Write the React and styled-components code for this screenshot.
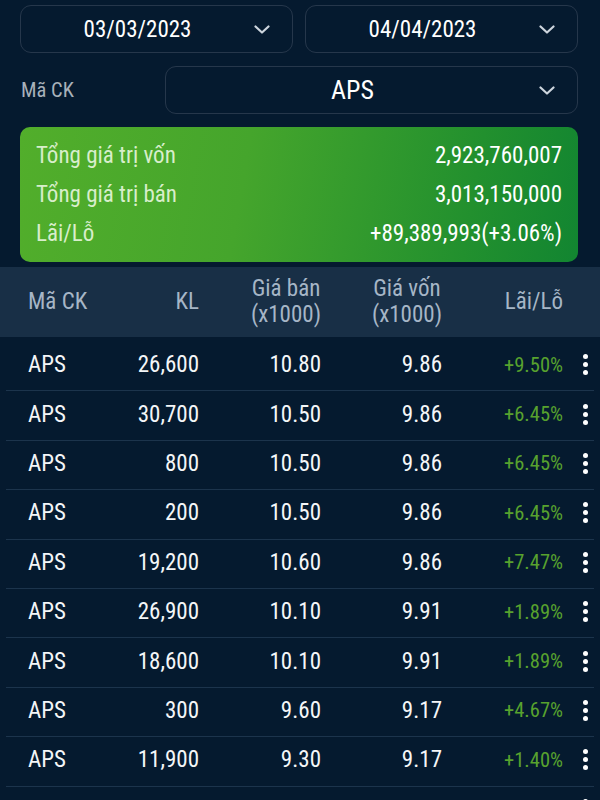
import React from "react";
import styled, { createGlobalStyle } from "styled-components";

const GlobalStyle = createGlobalStyle`
  html, body {
    margin: 0;
    padding: 0;
    background: #051a2f;
  }
  body {
    font-family: Roboto, "Noto Sans", "Liberation Sans", sans-serif;
    font-stretch: condensed;
    color: #ffffff;
    overflow: hidden;
  }
`;

const Page = styled.div`
  width: 600px;
  height: 800px;
  overflow: hidden;
  background: #051a2f;
  display: flex;
  flex-direction: column;
  & > * {
    flex-shrink: 0;
  }
`;

const Filters = styled.div`
  padding: 5px 22px 0 20px;
  display: flex;
  flex-direction: column;
  gap: 13px;
`;

const DateRow = styled.div`
  display: grid;
  grid-template-columns: 1fr 1fr;
  gap: 12px;
`;

const SelectBox = styled.div`
  height: 48px;
  box-sizing: border-box;
  border: 1.5px solid #26374b;
  border-radius: 11px;
  display: flex;
  align-items: center;
  padding-right: 22px;
`;

const SelectText = styled.span`
  flex: 1;
  text-align: center;
  font-size: ${(p) => p.$size || 23}px;
  color: #ffffff;
`;

const CodeRow = styled.div`
  display: grid;
  grid-template-columns: 145px 1fr;
  align-items: center;
`;

const Label = styled.span`
  font-size: 20.5px;
  color: #a8b1ba;
  padding-left: 1px;
`;

const Summary = styled.div`
  margin: 13px 22px 0 20px;
  border-radius: 10px;
  padding: 9px 16px 9px 16px;
  background: linear-gradient(100deg, #52ae2b 0%, #45a52c 40%, #22902e 80%, #128531 100%);
`;

const SummaryLine = styled.div`
  display: flex;
  justify-content: space-between;
  align-items: center;
  height: 39px;
  font-size: 23px;
`;

const SummaryLabel = styled.span`
  color: #d8eecb;
`;

const SummaryValue = styled.span`
  color: #ffffff;
`;

const COLS = "92px 79px 122px 121px 121px 1fr";

const HeaderRow = styled.div`
  margin-top: 5px;
  height: 70px;
  background: #182f46;
  display: grid;
  grid-template-columns: ${COLS};
  align-items: center;
  padding-left: 28px;
  font-size: 23px;
  color: #a6b6c6;
`;

const HeadCell = styled.div`
  justify-self: ${(p) => (p.$align === "left" ? "start" : "end")};
  text-align: center;
  line-height: 26px;
`;

const Body = styled.div`
  padding-top: 5px;
`;

const Row = styled.div`
  margin: 0 6px;
  height: 49.4px;
  box-sizing: border-box;
  border-bottom: 1px solid #1c344c;
  display: grid;
  grid-template-columns: ${COLS};
  align-items: center;
  padding: 0 0 3px 22px;
  font-size: 23px;
  color: #f4f6f8;
`;

const Cell = styled.div`
  justify-self: ${(p) => (p.$align === "left" ? "start" : "end")};
  color: ${(p) => (p.$profit ? "#58a22e" : "inherit")};
  font-size: ${(p) => (p.$profit ? "20.5px" : "inherit")};
`;

const MenuDots = styled.div`
  justify-self: start;
  margin-left: 20px;
  display: flex;
  flex-direction: column;
  gap: 3px;
  span {
    width: 5px;
    height: 5px;
    border-radius: 50%;
    background: #ffffff;
  }
`;

const Chevron = () => (
  <svg width="16" height="9" viewBox="0 0 16 9" fill="none">
    <path d="M1.5 1.5 L8 7.5 L14.5 1.5" stroke="#cdd5dd" strokeWidth="2.2" strokeLinecap="round" strokeLinejoin="round" />
  </svg>
);

const rows = [
  ["APS", "26,600", "10.80", "9.86", "+9.50%"],
  ["APS", "30,700", "10.50", "9.86", "+6.45%"],
  ["APS", "800", "10.50", "9.86", "+6.45%"],
  ["APS", "200", "10.50", "9.86", "+6.45%"],
  ["APS", "19,200", "10.60", "9.86", "+7.47%"],
  ["APS", "26,900", "10.10", "9.91", "+1.89%"],
  ["APS", "18,600", "10.10", "9.91", "+1.89%"],
  ["APS", "300", "9.60", "9.17", "+4.67%"],
  ["APS", "11,900", "9.30", "9.17", "+1.40%"],
  ["APS", "10,100", "9.30", "9.17", "+1.40%"],
];

export default function App() {
  return (
    <Page>
      <GlobalStyle />
      <Filters>
        <DateRow>
          <SelectBox>
            <SelectText>03/03/2023</SelectText>
            <Chevron />
          </SelectBox>
          <SelectBox>
            <SelectText>04/04/2023</SelectText>
            <Chevron />
          </SelectBox>
        </DateRow>
        <CodeRow>
          <Label>Mã CK</Label>
          <SelectBox>
            <SelectText $size={26}>APS</SelectText>
            <Chevron />
          </SelectBox>
        </CodeRow>
      </Filters>

      <Summary>
        <SummaryLine>
          <SummaryLabel>Tổng giá trị vốn</SummaryLabel>
          <SummaryValue>2,923,760,007</SummaryValue>
        </SummaryLine>
        <SummaryLine>
          <SummaryLabel>Tổng giá trị bán</SummaryLabel>
          <SummaryValue>3,013,150,000</SummaryValue>
        </SummaryLine>
        <SummaryLine>
          <SummaryLabel>Lãi/Lỗ</SummaryLabel>
          <SummaryValue>+89,389,993(+3.06%)</SummaryValue>
        </SummaryLine>
      </Summary>

      <HeaderRow>
        <HeadCell $align="left">Mã CK</HeadCell>
        <HeadCell>KL</HeadCell>
        <HeadCell>
          Giá bán
          <br />
          (x1000)
        </HeadCell>
        <HeadCell>
          Giá vốn
          <br />
          (x1000)
        </HeadCell>
        <HeadCell>Lãi/Lỗ</HeadCell>
        <div />
      </HeaderRow>

      <Body>
        {rows.map((r, i) => (
          <Row key={i}>
            <Cell $align="left">{r[0]}</Cell>
            <Cell>{r[1]}</Cell>
            <Cell>{r[2]}</Cell>
            <Cell>{r[3]}</Cell>
            <Cell $profit>{r[4]}</Cell>
            <MenuDots>
              <span />
              <span />
              <span />
            </MenuDots>
          </Row>
        ))}
      </Body>
    </Page>
  );
}
